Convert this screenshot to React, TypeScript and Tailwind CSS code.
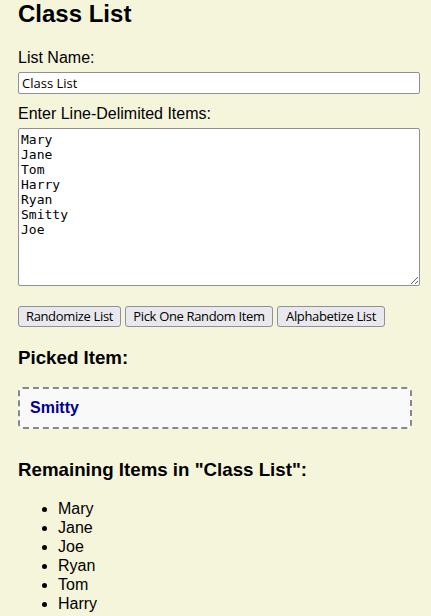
import { useState } from "react";

const items = ["Mary", "Jane", "Tom", "Harry", "Ryan", "Smitty", "Joe"];
const remaining = ["Mary", "Jane", "Joe", "Ryan", "Tom", "Harry"];

const btn =
  "h-[21px] whitespace-nowrap rounded-[3px] border border-[#8f8f9d] bg-[#e9e9ed] px-0 text-[13px] leading-[17px] tracking-[-0.35px] text-black font-['Open_Sans',sans-serif]";

export default function App() {
  const [name, setName] = useState("Class List");
  const [text, setText] = useState(items.join("\n"));

  return (
    <div className="min-h-screen bg-[#f5f5dc] pl-[18px] font-['Liberation_Sans',Arial,sans-serif] text-black">
      <h1 className="text-[24px] font-bold leading-[27px]">Class List</h1>

      <label className="mt-[22px] block text-[16px] leading-[18px]">List Name:</label>
      <input
        value={name}
        onChange={(e) => setName(e.target.value)}
        className="mt-[5px] block h-[22px] w-[402px] rounded-[2px] border border-[#8f8f9d] bg-white px-[3px] text-[13px] font-['Open_Sans',sans-serif] outline-none"
      />

      <label className="mt-[11px] block text-[16px] leading-[18px]">Enter Line-Delimited Items:</label>
      <textarea
        value={text}
        onChange={(e) => setText(e.target.value)}
        className="mt-[5px] block h-[158px] w-[402px] rounded-[2px] border border-[#8f8f9d] bg-white px-[2px] pt-[3px] text-[13px] leading-[15px] font-['DejaVu_Sans_Mono',monospace] outline-none"
      />

      <div className="mt-[20px] flex gap-[4px]">
        <button className={`${btn} w-[103px]`}>Randomize List</button>
        <button className={`${btn} w-[148px]`}>Pick One Random Item</button>
        <button className={`${btn} w-[108px]`}>Alphabetize List</button>
      </div>

      <h3 className="mt-[20px] text-[18.72px] font-bold leading-[22px]">Picked Item:</h3>
      <div className="mt-[18px] w-[394px] rounded-[5px] border-2 border-dashed border-[#888888] bg-[#f9f9f9] p-[10px]">
        <span className="block text-[16px] font-bold leading-[18px] text-[#00008b]">Smitty</span>
      </div>

      <h3 className="mt-[30px] text-[18.72px] font-bold leading-[22px]">
        Remaining Items in "{name}":
      </h3>
      <ul className="mt-[18px] list-disc pl-[40px] text-[16px] leading-[19px]">
        {remaining.map((r) => (
          <li key={r}>{r}</li>
        ))}
      </ul>
    </div>
  );
}
